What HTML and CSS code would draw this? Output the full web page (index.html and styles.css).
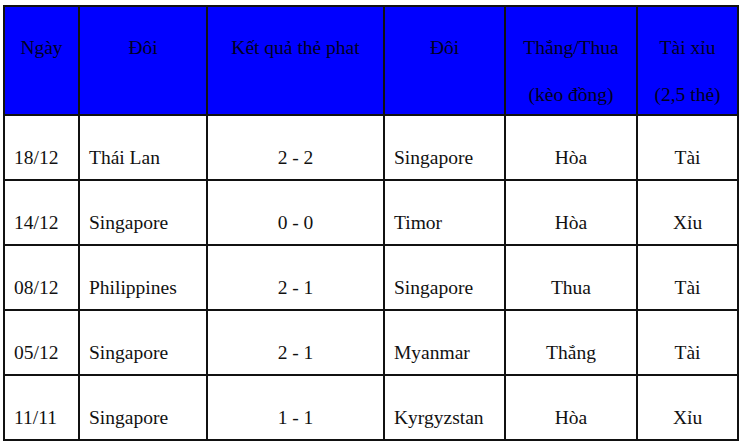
FILE: index.html
```html
<!DOCTYPE html>
<html lang="vi">
<head>
<meta charset="utf-8">
<title>Lịch sử đối đầu</title>
<link rel="stylesheet" href="styles.css">
</head>
<body>
<table class="stats">
  <colgroup>
    <col class="c1"><col class="c2"><col class="c3"><col class="c4"><col class="c5"><col class="c6">
  </colgroup>
  <thead>
    <tr>
      <th><div class="ln">Ngày</div></th>
      <th><div class="ln">Đôi</div></th>
      <th><div class="ln">Kết quả thẻ phat</div></th>
      <th><div class="ln">Đôi</div></th>
      <th><div class="ln">Thắng/Thua</div><div class="ln second">(kèo đồng)</div></th>
      <th><div class="ln">Tài xỉu</div><div class="ln second">(2,5 thẻ)</div></th>
    </tr>
  </thead>
  <tbody>
    <tr><td>18/12</td><td>Thái Lan</td><td class="ctr">2 - 2</td><td>Singapore</td><td class="ctr">Hòa</td><td class="ctr">Tài</td></tr>
    <tr><td>14/12</td><td>Singapore</td><td class="ctr">0 - 0</td><td>Timor</td><td class="ctr">Hòa</td><td class="ctr">Xỉu</td></tr>
    <tr><td>08/12</td><td>Philippines</td><td class="ctr">2 - 1</td><td>Singapore</td><td class="ctr">Thua</td><td class="ctr">Tài</td></tr>
    <tr><td>05/12</td><td>Singapore</td><td class="ctr">2 - 1</td><td>Myanmar</td><td class="ctr">Thắng</td><td class="ctr">Tài</td></tr>
    <tr><td>11/11</td><td>Singapore</td><td class="ctr">1 - 1</td><td>Kyrgyzstan</td><td class="ctr">Hòa</td><td class="ctr">Xỉu</td></tr>
  </tbody>
</table>
</body>
</html>
```
FILE: styles.css
```css
html, body {
  margin: 0;
  padding: 0;
  background: #ffffff;
}
body {
  padding: 5px 0 0 3px;
  font-family: "Liberation Serif", "Times New Roman", serif;
  font-size: 19.5px;
  color: #111111;
}
.stats {
  border-collapse: collapse;
  table-layout: fixed;
  width: 734px;
}
.c1 { width: 75px; }
.c2 { width: 128px; }
.c3 { width: 177px; }
.c4 { width: 121px; }
.c5 { width: 132px; }
.c6 { width: 101px; }
.stats th,
.stats td {
  border: 2px solid #111111;
  line-height: 24px;
}
.stats th {
  background: #0000ff;
  color: #000022;
  font-weight: normal;
  text-align: center;
  vertical-align: top;
  padding: 29px 0 7px 0;
  height: 71px;
}
.ln.second {
  margin-top: 23px;
}
.stats td {
  height: 24px;
  padding: 30px 9px 9px 9px;
  vertical-align: top;
  text-align: left;
  white-space: nowrap;
}
.stats td.ctr {
  text-align: center;
}
```
